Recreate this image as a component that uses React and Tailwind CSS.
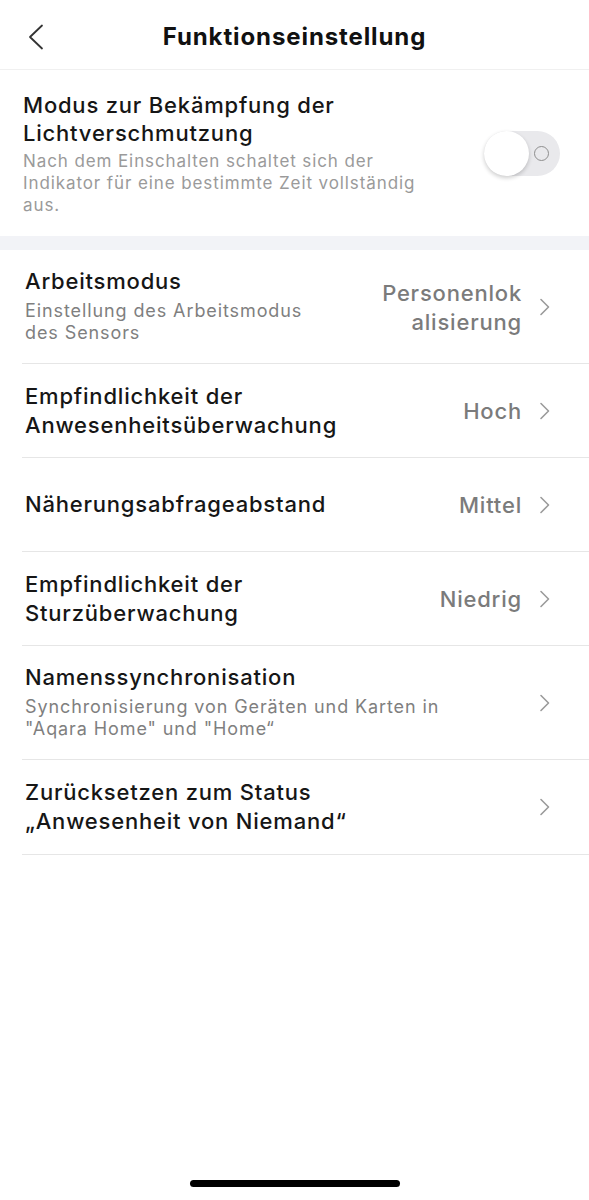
import React from "react";

function Chevron() {
  return (
    <svg width="12" height="18" viewBox="0 0 12 18" fill="none" className="shrink-0">
      <path d="M2 1.5 L9.5 9 L2 16.5" stroke="#9b9b9b" strokeWidth="1.6" strokeLinecap="round" strokeLinejoin="round" />
    </svg>
  );
}

function Row({ title, sub, value, h }) {
  return (
    <div className={`ml-[22px] flex items-center border-b border-[#e6e6e6] pr-[38px] ${h}`}>
      <div className={`flex-1 pl-[3px] ${sub ? "pb-[3px]" : ""}`}>
        <div className="whitespace-nowrap text-[22px] leading-[29px] tracking-[0.8px] text-[#161616] font-medium">{title}</div>
        {sub && <div className="mt-[4px] whitespace-nowrap text-[18px] leading-[22px] tracking-[0.9px] text-[#7f7f7f]">{sub}</div>}
      </div>
      {value && (
        <div className="mr-[17px] pt-[2px] whitespace-nowrap text-right text-[22px] leading-[29px] tracking-[0.8px] font-medium text-[#7b7b7b]">{value}</div>
      )}
      <Chevron />
    </div>
  );
}

export default function App() {
  return (
    <div className="relative h-[1200px] w-[589px] bg-white" style={{ fontFamily: "Inter, 'Noto Sans', sans-serif" }}>
      <div className="relative flex h-[70px] items-center justify-center border-b border-[#f0f0f0] pt-[4px]">
        <svg width="16" height="26" viewBox="0 0 16 26" fill="none" className="absolute left-[28px] top-[24px]">
          <path d="M14 1.5 L2 13 L14 24.5" stroke="#333" strokeWidth="1.8" strokeLinecap="round" strokeLinejoin="round" />
        </svg>
        <div className="text-[24px] font-bold tracking-[0.9px] text-[#111]">Funktionseinstellung</div>
      </div>

      <div className="flex h-[166px] items-center pl-[23px] pr-[29px]">
        <div className="flex-1">
          <div className="whitespace-nowrap text-[22px] leading-[28px] tracking-[0.8px] font-medium text-[#161616]">
            Modus zur Bekämpfung der<br />Lichtverschmutzung
          </div>
          <div className="mt-[3px] whitespace-nowrap text-[17px] leading-[22px] tracking-[0.9px] text-[#9a9a9a]">
            Nach dem Einschalten schaltet sich der<br />Indikator für eine bestimmte Zeit vollständig<br />aus.
          </div>
        </div>
        <div className="relative h-[45px] w-[76px] shrink-0 rounded-full bg-[#e9e9ec]">
          <div className="absolute left-0 top-0 h-[45px] w-[45px] rounded-full bg-white shadow-[0_2px_4px_rgba(0,0,0,0.2)]" />
          <div className="absolute right-[11px] top-[15px] h-[15px] w-[15px] rounded-full border border-[#8e8e8e]" />
        </div>
      </div>

      <div className="h-[14px] bg-[#f2f3f7]" />

      <Row
        h="h-[114px]"
        title="Arbeitsmodus"
        sub={<>Einstellung des Arbeitsmodus<br />des Sensors</>}
        value={<>Personenlok<br />alisierung</>}
      />
      <Row h="h-[94px]" title={<>Empfindlichkeit der<br />Anwesenheitsüberwachung</>} value="Hoch" />
      <Row h="h-[94px]" title="Näherungsabfrageabstand" value="Mittel" />
      <Row h="h-[94px]" title={<>Empfindlichkeit der<br />Sturzüberwachung</>} value="Niedrig" />
      <Row
        h="h-[114px]"
        title="Namenssynchronisation"
        sub={<>Synchronisierung von Geräten und Karten in<br />"Aqara Home" und "Home“</>}
      />
      <Row h="h-[95px]" title={<>Zurücksetzen zum Status<br />„Anwesenheit von Niemand“</>} />

      <div className="absolute bottom-[13px] left-[190px] h-[7px] w-[210px] rounded-full bg-black" />
    </div>
  );
}
